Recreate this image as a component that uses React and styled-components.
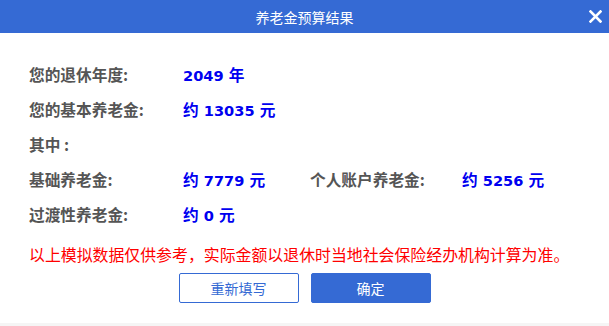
import React from 'react'
import styled, { createGlobalStyle } from 'styled-components'

const Global = createGlobalStyle`
  html, body {
    margin: 0;
    padding: 0;
    background: #f5f5f5;
  }
  body {
    font-family: "Noto Sans", "Noto Sans CJK SC", sans-serif;
  }
`;

const Dialog = styled.div`
  width: 609px;
  height: 323px;
  background: #fff;
  display: flex;
  flex-direction: column;
`;

const Header = styled.div`
  height: 33px;
  background: #356ad4;
  display: flex;
  align-items: center;
  justify-content: center;
  position: relative;
  color: #fff;
  font-size: 14px;
  font-family: "Noto Sans CJK SC", sans-serif;
`;

const Close = styled.button`
  position: absolute;
  right: 6px;
  top: 8px;
  width: 16px;
  height: 16px;
  padding: 0;
  border: none;
  background: none;
  cursor: pointer;
  display: flex;
  align-items: center;
  justify-content: center;
`;

const Body = styled.div`
  padding: 24px 0 0 29px;
  display: flex;
  flex-direction: column;
`;

const Grid = styled.div`
  display: grid;
  grid-template-columns: 154px 127px 152px auto;
  grid-auto-rows: 35px;
  align-items: center;
`;

const Label = styled.div`
  color: #555;
  font-weight: bold;
  font-size: 15.7px;
  font-family: "Noto Sans CJK SC", sans-serif;
  grid-column: ${p => p.$col || 'auto'};
`;

const Value = styled.div`
  color: #0000f0;
  font-weight: bold;
  font-size: 14.6px;
  font-family: "DejaVu Sans", "Noto Sans CJK SC", sans-serif;
  grid-column: ${p => p.$col || 'auto'};
`;

const Cjk = styled.span`
  font-size: 15.7px;
  font-family: "Noto Sans CJK SC", sans-serif;
`;

const Notice = styled.p`
  margin: 8px 0 0;
  color: #ff0000;
  font-size: 15.9px;
  line-height: 30px;
  font-family: "Noto Sans CJK SC", sans-serif;
`;

const Actions = styled.div`
  display: flex;
  justify-content: center;
  gap: 12px;
  margin-top: 3px;
`;

const Button = styled.button`
  width: 120px;
  height: 30px;
  border-radius: 2px;
  border: 1px solid #356ad4;
  background: ${p => (p.$primary ? '#356ad4' : '#fff')};
  color: ${p => (p.$primary ? '#fff' : '#356ad4')};
  font-size: 14px;
  font-family: "Noto Sans CJK SC", sans-serif;
  cursor: pointer;
`;

const Amount = ({ pre, num, unit, col }) => (
  <Value $col={col}>
    {pre && <Cjk>{pre}</Cjk>}
    {pre && ' '}
    {num}{' '}
    <Cjk>{unit}</Cjk>
  </Value>
);

const App = () => {
  return (
    <>
      <Global />
      <Dialog>
        <Header>
          养老金预算结果
          <Close>
            <svg width="13" height="13" viewBox="0 0 13 13">
              <path d="M1.5 1.5 L11.5 11.5 M11.5 1.5 L1.5 11.5" stroke="#fff" strokeWidth="2.6" strokeLinecap="square" />
            </svg>
          </Close>
        </Header>
        <Body>
          <Grid>
            <Label>您的退休年度:</Label>
            <Amount num="2049" unit="年" col="span 3" />
            <Label>您的基本养老金:</Label>
            <Amount pre="约" num="13035" unit="元" col="span 3" />
            <Label $col="span 4">其中 :</Label>
            <Label>基础养老金:</Label>
            <Amount pre="约" num="7779" unit="元" />
            <Label>个人账户养老金:</Label>
            <Amount pre="约" num="5256" unit="元" />
            <Label>过渡性养老金:</Label>
            <Amount pre="约" num="0" unit="元" col="span 3" />
          </Grid>
          <Notice>以上模拟数据仅供参考，实际金额以退休时当地社会保险经办机构计算为准。</Notice>
        </Body>
        <Actions>
          <Button>重新填写</Button>
          <Button $primary>确定</Button>
        </Actions>
      </Dialog>
    </>
  )
}

export default App
